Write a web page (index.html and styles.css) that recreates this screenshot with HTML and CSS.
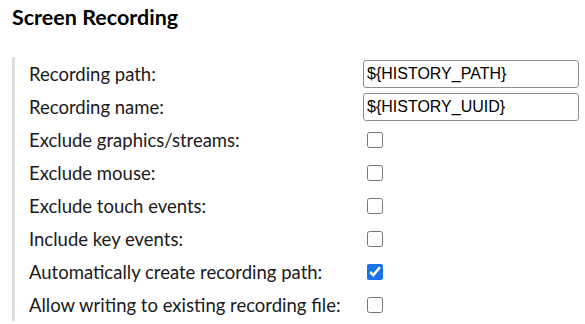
FILE: index.html
```html
<!DOCTYPE html>
<html>
<head>
<meta charset="utf-8">
<link rel="stylesheet" href="styles.css">
</head>
<body>
<div class="settings">
  <h2 class="title">Screen Recording</h2>
  <div class="section">
    <div class="row">
      <label class="label">Recording path:</label>
      <div class="field"><input class="text" type="text" value="${HISTORY_PATH}"></div>
    </div>
    <div class="row">
      <label class="label">Recording name:</label>
      <div class="field"><input class="text" type="text" value="${HISTORY_UUID}"></div>
    </div>
    <div class="row">
      <label class="label">Exclude graphics/streams:</label>
      <div class="field"><input class="check" type="checkbox"></div>
    </div>
    <div class="row">
      <label class="label">Exclude mouse:</label>
      <div class="field"><input class="check" type="checkbox"></div>
    </div>
    <div class="row">
      <label class="label">Exclude touch events:</label>
      <div class="field"><input class="check" type="checkbox"></div>
    </div>
    <div class="row">
      <label class="label">Include key events:</label>
      <div class="field"><input class="check" type="checkbox"></div>
    </div>
    <div class="row">
      <label class="label">Automatically create recording path:</label>
      <div class="field"><input class="check" type="checkbox" checked></div>
    </div>
    <div class="row">
      <label class="label">Allow writing to existing recording file:</label>
      <div class="field"><input class="check" type="checkbox"></div>
    </div>
  </div>
</div>
</body>
</html>
```

FILE: styles.css
```css
html, body {
  margin: 0;
  padding: 0;
  background: #ffffff;
}
body {
  font-family: Lato, "Noto Sans", sans-serif;
  color: #000000;
}
.settings {
  padding: 3px 0 0 12px;
}
.title {
  margin: 0;
  font-size: 21.5px;
  font-weight: 700;
  line-height: 28px;
  color: #000000;
}
.section {
  margin-top: 26px;
  border-left: 3px solid #dcdedc;
  padding-left: 14px;
  display: flex;
  flex-direction: column;
}
.row {
  display: grid;
  grid-template-columns: 334px 216px;
  align-items: center;
  height: 33px;
}
.label {
  font-size: 18.5px;
  line-height: 22px;
  color: #1a1a1a;
}
.field {
  display: flex;
  align-items: center;
}
.text {
  box-sizing: border-box;
  width: 216px;
  height: 28px;
  margin: 0;
  padding: 0 3px;
  border: 1px solid #8f8f8f;
  border-radius: 3px;
  font-family: "Liberation Sans", Arial, sans-serif;
  font-size: 16px;
  color: #000000;
}
.check {
  width: 16px;
  height: 16px;
  margin: 0 0 0 4px;
  accent-color: #1a73e8;
}
```
